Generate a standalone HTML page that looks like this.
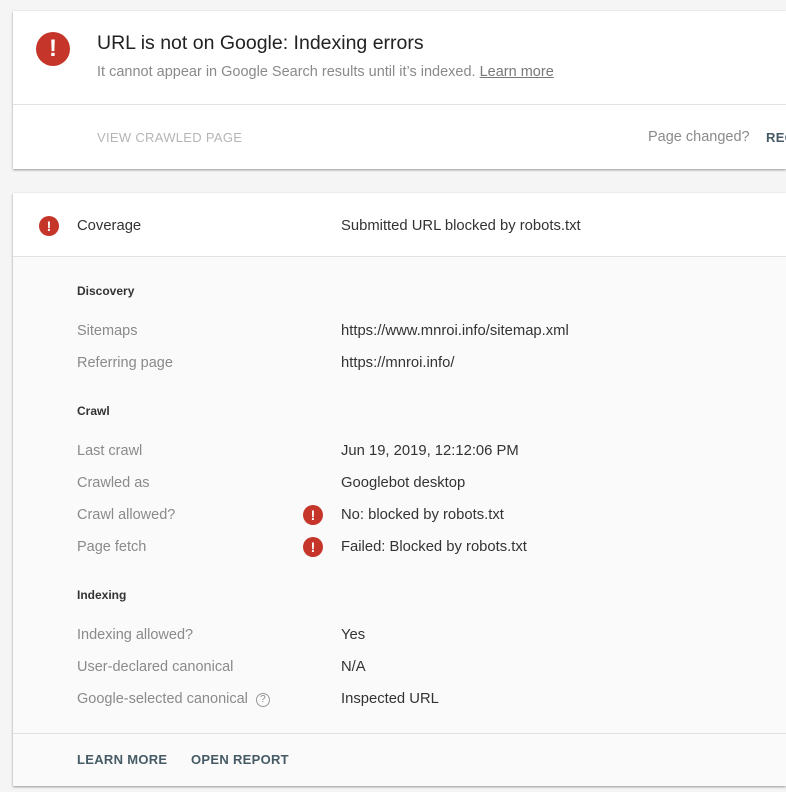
<!DOCTYPE html>
<html><head><meta charset="utf-8"><style>
*{margin:0;padding:0;box-sizing:border-box}
body{width:786px;height:792px;background:#f5f5f5;font-family:"Liberation Sans",Roboto,sans-serif;position:relative;overflow:hidden;color:#333}
.card{position:absolute;left:13px;width:773px;background:#fff;box-shadow:0 1px 2px rgba(0,0,0,.3),0 1px 3px rgba(0,0,0,.1);overflow:hidden}
.t{position:absolute;white-space:nowrap}
.err{position:absolute;border-radius:50%;background:#c5352a;color:#fff;font-weight:bold;text-align:center}
.g{color:#8a8a8a;font-size:14.5px}
.v{color:#333;font-size:14.8px}
.h{color:#333;font-size:12px;font-weight:bold}
.b{font-size:13px;color:#455a64;font-weight:bold;letter-spacing:.3px}
</style></head><body>
<div class="card" style="top:11px;height:158px">
  <div class="err" style="left:23px;top:21px;width:34px;height:34px;font-size:24px;line-height:34px">!</div>
  <div class="t" style="left:84px;top:21px;font-size:19.5px;color:#222">URL is not on Google: Indexing errors</div>
  <div class="t" style="left:84px;top:53px;font-size:14.5px;color:#8a8a8a">It cannot appear in Google Search results until it’s indexed. <span style="text-decoration:underline;color:#777">Learn more</span></div>
  <div style="position:absolute;left:0;right:0;top:93px;border-top:1px solid #e2e2e2"></div>
  <div class="t b" style="left:84px;top:119px;color:#b5b5b5;font-weight:normal">VIEW CRAWLED PAGE</div>
  <div class="t" style="left:635px;top:118px;font-size:14.5px;color:#8a8a8a">Page changed?</div>
  <div class="t b" style="left:753px;top:119px">REQUEST</div>
</div>
<div class="card" style="top:193px;height:593px;background:#fafafa">
  <div style="position:absolute;left:0;right:0;top:0;height:64px;background:#fff;border-bottom:1px solid #e2e2e2"></div>
  <div class="err" style="left:26px;top:23px;width:20px;height:20px;font-size:14px;line-height:20px">!</div>
  <div class="t v" style="left:64px;top:25px">Coverage</div>
  <div class="t v" style="left:328px;top:25px">Submitted URL blocked by robots.txt</div>

  <div class="t h" style="left:64px;top:91px">Discovery</div>
  <div class="t g" style="left:64px;top:130px">Sitemaps</div>
  <div class="t v" style="left:328px;top:130px">https://www.mnroi.info/sitemap.xml</div>
  <div class="t g" style="left:64px;top:162px">Referring page</div>
  <div class="t v" style="left:328px;top:162px">https://mnroi.info/</div>

  <div class="t h" style="left:64px;top:211px">Crawl</div>
  <div class="t g" style="left:64px;top:250px">Last crawl</div>
  <div class="t v" style="left:328px;top:250px">Jun 19, 2019, 12:12:06 PM</div>
  <div class="t g" style="left:64px;top:282px">Crawled as</div>
  <div class="t v" style="left:328px;top:282px">Googlebot desktop</div>
  <div class="t g" style="left:64px;top:314px">Crawl allowed?</div>
  <div class="err" style="left:290px;top:312px;width:20px;height:20px;font-size:14px;line-height:20px">!</div>
  <div class="t v" style="left:328px;top:314px">No: blocked by robots.txt</div>
  <div class="t g" style="left:64px;top:346px">Page fetch</div>
  <div class="err" style="left:290px;top:344px;width:20px;height:20px;font-size:14px;line-height:20px">!</div>
  <div class="t v" style="left:328px;top:346px">Failed: Blocked by robots.txt</div>

  <div class="t h" style="left:64px;top:395px">Indexing</div>
  <div class="t g" style="left:64px;top:434px">Indexing allowed?</div>
  <div class="t v" style="left:328px;top:434px">Yes</div>
  <div class="t g" style="left:64px;top:466px">User-declared canonical</div>
  <div class="t v" style="left:328px;top:466px">N/A</div>
  <div class="t g" style="left:64px;top:498px">Google-selected canonical <span style="display:inline-block;width:14px;height:14px;border:1.3px solid #999;border-radius:50%;font-size:10px;line-height:12px;text-align:center;vertical-align:1px;margin-left:4px">?</span></div>
  <div class="t v" style="left:328px;top:498px">Inspected URL</div>

  <div style="position:absolute;left:0;right:0;top:540px;border-top:1px solid #e0e0e0"></div>
  <div class="t b" style="left:64px;top:559px">LEARN MORE</div>
  <div class="t b" style="left:178px;top:559px">OPEN REPORT</div>
</div>
</body></html>
